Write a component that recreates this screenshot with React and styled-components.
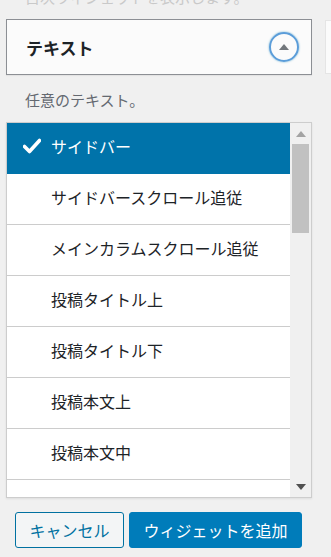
import React from 'react';
import styled, { createGlobalStyle } from 'styled-components';

const GlobalStyle = createGlobalStyle`
  html, body {
    margin: 0;
    padding: 0;
    background: #f0f0f0;
  }
  * {
    box-sizing: border-box;
  }
`;

const FONT = `"Noto Sans CJK JP", "Noto Sans", sans-serif`;

const Page = styled.div`
  width: 331px;
  height: 557px;
  overflow: hidden;
  background: #f0f0f0;
  font-family: ${FONT};
  color: #1d2327;
`;

const FadedHint = styled.p`
  margin: -13px 0 0;
  padding-left: 25px;
  height: 20px;
  font-size: 15px;
  line-height: 20px;
  color: #c9c9c9;
  white-space: nowrap;
`;

const HeaderRow = styled.div`
  display: flex;
  gap: 13px;
  margin-top: 12px;
  padding-left: 6px;
`;

const WidgetHeader = styled.div`
  display: flex;
  flex: none;
  align-items: center;
  justify-content: space-between;
  width: 306px;
  height: 56px;
  padding: 0 12px 0 19px;
  background: #fbfbfb;
  border: 1px solid #8c8f94;
  box-shadow: 0 1px 1px rgba(0, 0, 0, 0.05);
`;

const WidgetTitle = styled.h3`
  margin: 0;
  font-size: 17px;
  font-weight: 700;
  color: #1d2327;
`;

const ToggleButton = styled.button`
  display: flex;
  align-items: center;
  justify-content: center;
  width: 30px;
  height: 30px;
  padding: 0;
  border-radius: 50%;
  border: 2px solid #5b9dd9;
  background: transparent;
  box-shadow: 0 0 2px rgba(30, 140, 190, 0.7);
`;

const SideBox = styled.div`
  flex: none;
  width: 20px;
  height: 54px;
  margin-top: 1px;
  background: #fbfbfb;
  border: 1px solid #e5e5e5;
`;

const Description = styled.p`
  margin: 14px 0 0;
  padding-left: 25px;
  font-size: 15px;
  line-height: 22px;
  color: #646970;
`;

const ListBox = styled.div`
  display: flex;
  margin: 11px 0 0 6px;
  width: 306px;
  height: 376px;
  border: 1px solid #cdcdcd;
  background: #fff;
  box-shadow: 0 1px 2px rgba(0, 0, 0, 0.08);
  overflow: hidden;
`;

const Options = styled.ul`
  flex: 1;
  margin: 0;
  padding: 0;
  list-style: none;
  overflow: hidden;
`;

const Option = styled.li`
  display: flex;
  align-items: center;
  height: 51px;
  padding-bottom: 4px;
  border-bottom: 1px solid ${({ selected }) => (selected ? '#0073aa' : '#cccccc')};
  background: ${({ selected }) => (selected ? '#0073aa' : '#fff')};
  color: ${({ selected }) => (selected ? '#fff' : '#1d2327')};
  font-size: 16px;
  white-space: nowrap;
`;

const CheckSlot = styled.span`
  display: flex;
  align-items: center;
  width: 44px;
  padding-left: 16px;
  flex: none;
`;

const Scrollbar = styled.div`
  display: flex;
  flex-direction: column;
  width: 21px;
  flex: none;
  background: #f0f0f0;
`;

const ArrowButton = styled.div`
  display: flex;
  align-items: center;
  justify-content: center;
  height: 21px;
  flex: none;
`;

const Track = styled.div`
  flex: 1;
  padding: 0 2px;
`;

const Thumb = styled.div`
  height: 89px;
  background: #c1c1c1;
`;

const Arrow = ({ down, color }) => (
  <svg width="10" height="6" viewBox="0 0 10 6">
    <path d={down ? 'M0 0 L10 0 L5 6 Z' : 'M0 6 L10 6 L5 0 Z'} fill={color} />
  </svg>
);

const Actions = styled.div`
  display: flex;
  gap: 5px;
  margin: 14px 0 0 15px;
`;

const Button = styled.button`
  height: 36px;
  padding: 0 12px;
  border-radius: 3px;
  font-family: ${FONT};
  font-size: 16px;
  line-height: 1;
  border: 1px solid ${({ primary }) => (primary ? '#007cba' : '#0071a1')};
  background: ${({ primary }) => (primary ? '#007cba' : '#f3f5f6')};
  color: ${({ primary }) => (primary ? '#fff' : '#0071a1')};
  width: ${({ w }) => w}px;
`;

const Check = () => (
  <svg width="18" height="16" viewBox="0 0 18 16">
    <path d="M1.5 8.5 L6.5 13.5 L16.5 2.5" fill="none" stroke="#fff" strokeWidth="3.6" strokeLinecap="round" strokeLinejoin="round" />
  </svg>
);

const items = [
  'サイドバー',
  'サイドバースクロール追従',
  'メインカラムスクロール追従',
  '投稿タイトル上',
  '投稿タイトル下',
  '投稿本文上',
  '投稿本文中',
];

export default function App() {
  return (
    <Page>
      <GlobalStyle />
      <FadedHint>目次ウィジェットを表示します。</FadedHint>
      <HeaderRow>
        <WidgetHeader>
          <WidgetTitle>テキスト</WidgetTitle>
          <ToggleButton aria-label="toggle">
            <Arrow color="#72777c" />
          </ToggleButton>
        </WidgetHeader>
        <SideBox />
      </HeaderRow>
      <Description>任意のテキスト。</Description>
      <ListBox>
        <Options>
          {items.map((item, i) => (
            <Option key={item} selected={i === 0}>
              <CheckSlot>{i === 0 ? <Check /> : null}</CheckSlot>
              {item}
            </Option>
          ))}
        </Options>
        <Scrollbar>
          <ArrowButton>
            <Arrow color="#a3a3a3" />
          </ArrowButton>
          <Track>
            <Thumb />
          </Track>
          <ArrowButton>
            <Arrow down color="#505050" />
          </ArrowButton>
        </Scrollbar>
      </ListBox>
      <Actions>
        <Button w={109}>キャンセル</Button>
        <Button primary w={173}>ウィジェットを追加</Button>
      </Actions>
    </Page>
  );
}
